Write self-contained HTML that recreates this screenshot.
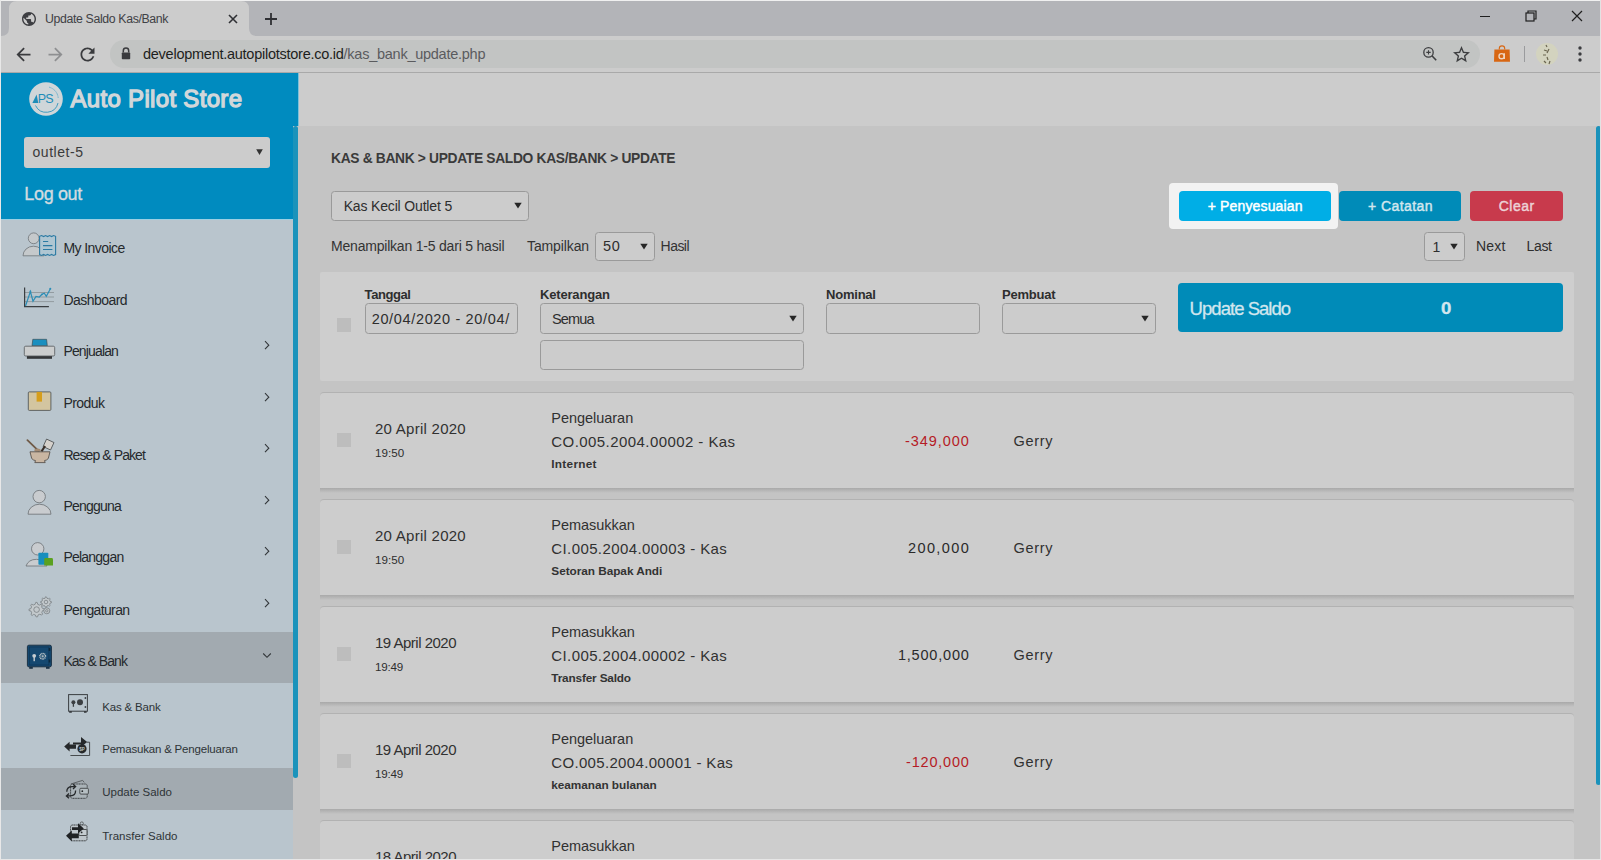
<!DOCTYPE html>
<html><head><meta charset="utf-8"><style>
html,body{margin:0;padding:0;width:1601px;height:860px;overflow:hidden;background:#c4c4c4;font-family:"Liberation Sans", sans-serif;}
#root{position:relative;width:1601px;height:860px;overflow:hidden;}
</style></head><body><div id="root">
<div style="position:absolute;left:0px;top:0px;width:1601px;height:860px;background:#e6e6e6;"></div>
<div style="position:absolute;left:1px;top:1px;width:1599px;height:35px;background:#b3b4b8;"></div>
<svg style="position:absolute;left:0;top:0" width="260" height="37"><path d="M1 36 Q9 36 9 28 L9 9 Q9 1 17 1 L241 1 Q249 1 249 9 L249 28 Q249 36 257 36 Z" fill="#cccccc"/></svg>
<div style="position:absolute;left:1px;top:36px;width:1599px;height:36px;background:#cccccc;"></div>
<div style="position:absolute;left:1px;top:72px;width:1599px;height:1px;background:#a9a9a9;"></div>
<div style="position:absolute;left:110px;top:40px;width:1370px;height:28px;background:#c2c4c3;border-radius:14px;"></div>
<svg style="position:absolute;left:21.8px;top:12px" width="14" height="14" viewBox="2 2 20 20"><circle cx="12" cy="12" r="9.6" fill="#cccccc"/><path fill="#3d3e42" d="M12 2C6.48 2 2 6.48 2 12s4.48 10 10 10 10-4.48 10-10S17.520 2 12 2zm-1 17.93c-3.95-.49-7-3.85-7-7.93 0-.62.08-1.21.21-1.790L9 15v1c0 1.1.9 2 2 2v1.93zm6.9-2.54c-.26-.81-1-1.39-1.9-1.39h-1v-3c0-.55-.45-1-1-1H8v-2h2c.55 0 1-.45 1-1V7h2c1.1 0 2-.9 2-2v-.41c2.93 1.19 5 4.06 5 7.41 0 2.08-.8 3.97-2.1 5.39z"/></svg>
<div style="position:absolute;left:45px;top:12.69px;font-size:12.3px;line-height:12.3px;font-weight:normal;color:#404145;white-space:nowrap;font-family:'Liberation Sans', sans-serif;letter-spacing:-0.354px;"><span>Update Saldo Kas/Bank</span></div>
<svg style="position:absolute;left:228px;top:14px" width="10" height="10" viewBox="0 0 10 10"><path d="M1 1 L9 9 M9 1 L1 9" stroke="#2f3034" stroke-width="1.6"/></svg>
<svg style="position:absolute;left:264px;top:12px" width="14" height="14" viewBox="0 0 14 14"><path d="M7 1 V13 M1 7 H13" stroke="#2f3034" stroke-width="1.8"/></svg>
<div style="position:absolute;left:1480px;top:16px;width:10px;height:1.3px;background:#1f1f1f;"></div>
<svg style="position:absolute;left:1525px;top:10px" width="12" height="12" viewBox="0 0 12 12"><rect x="1" y="3" width="8" height="8" fill="none" stroke="#1f1f1f" stroke-width="1.2"/><path d="M3 3 V1 H11 V9 H9" fill="none" stroke="#1f1f1f" stroke-width="1.2"/></svg>
<svg style="position:absolute;left:1571px;top:10px" width="12" height="12" viewBox="0 0 12 12"><path d="M1 1 L11 11 M11 1 L1 11" stroke="#1f1f1f" stroke-width="1.2"/></svg>
<svg style="position:absolute;left:12.5px;top:43.5px" width="21" height="21" viewBox="0 0 24 24"><path fill="#3a3b3e" d="M20 11H7.83l5.59-5.59L12 4l-8 8 8 8 1.41-1.41L7.83 13H20v-2z"/></svg>
<svg style="position:absolute;left:44.5px;top:43.5px" width="21" height="21" viewBox="0 0 24 24"><path fill="#8e8f91" d="M12 4l-1.41 1.41L16.17 11H4v2h12.17l-5.58 5.59L12 20l8-8z"/></svg>
<svg style="position:absolute;left:76.5px;top:43.5px" width="21" height="21" viewBox="0 0 24 24"><path fill="#3a3b3e" d="M17.65 6.35C16.2 4.9 14.21 4 12 4c-4.420 0-7.990 3.58-7.990 8s3.57 8 7.990 8c3.73 0 6.84-2.55 7.73-6h-2.08c-.82 2.33-3.04 4-5.65 4-3.31 0-6-2.69-6-6s2.69-6 6-6c1.66 0 3.14.69 4.22 1.78L13 11h7V4l-2.35 2.35z"/></svg>
<svg style="position:absolute;left:121px;top:47px" width="10" height="13" viewBox="0 0 10 13"><path d="M2.3 5.5 V3.8 A2.7 2.7 0 0 1 7.7 3.8 V5.5" fill="none" stroke="#3a3b3e" stroke-width="1.5"/><rect x="0.8" y="5.5" width="8.4" height="6.7" rx="0.8" fill="#3a3b3e"/></svg>
<div style="position:absolute;left:143px;top:46.73px;font-size:14.5px;line-height:14.5px;font-weight:normal;color:#1d1e20;white-space:nowrap;font-family:'Liberation Sans', sans-serif;letter-spacing:-0.256px;"><span>development.autopilotstore.co.id<span style="color:#5a5b5e">/kas_bank_update.php</span></span></div>
<svg style="position:absolute;left:1418px;top:42px" width="22" height="22" viewBox="0 0 22 22"><circle cx="10.5" cy="10.4" r="4.7" fill="none" stroke="#3d3e40" stroke-width="1.3"/><path d="M13.9 13.8 L18.2 18.2" stroke="#3d3e40" stroke-width="1.6"/><path d="M10.5 8.2 V12.6 M8.3 10.4 H12.7" stroke="#3d3e40" stroke-width="1.1"/></svg>
<svg style="position:absolute;left:1453px;top:45.5px" width="17" height="17" viewBox="2 2 20 20"><path fill="#3d3e40" d="M22 9.24l-7.19-.62L12 2 9.19 8.63 2 9.24l5.46 4.73L5.82 21 12 17.27 18.18 21l-1.63-7.030L22 9.24zM12 15.4l-3.76 2.27 1-4.28-3.32-2.88 4.38-.38L12 6.1l1.71 4.04 4.38.38-3.32 2.88 1 4.28L12 15.4z"/></svg>
<svg style="position:absolute;left:1492px;top:44px" width="20" height="20" viewBox="0 0 20 20"><path d="M7.3 5.5 V4.6 A2.7 2.7 0 0 1 12.7 4.6 V5.5" fill="none" stroke="#d86612" stroke-width="1.1"/><path d="M2.4 5.6 H17.6 L18 17.8 H2 Z" fill="#d86612"/><circle cx="9.6" cy="12.2" r="2.6" fill="none" stroke="#eed5c0" stroke-width="1.4"/><path d="M12.3 9.3 V15" stroke="#eed5c0" stroke-width="1.4"/></svg>
<div style="position:absolute;left:1524px;top:46px;width:1px;height:16px;background:#9a9b9d;"></div>
<svg style="position:absolute;left:1535px;top:42px" width="24" height="24" viewBox="0 0 24 24"><circle cx="12" cy="12" r="11" fill="#d3d3bf"/><path d="M11 3 L12 5 M9 8 L12 9 M14 7 L12 11 M8 13 L11 13 M12 15 L13 18 M9 19 L11 21 M15 19 L14 22" stroke="#6b6650" stroke-width="1.2"/></svg>
<svg style="position:absolute;left:1576px;top:45px" width="8" height="18" viewBox="0 0 8 18"><circle cx="4" cy="3" r="1.7" fill="#3a3b3e"/><circle cx="4" cy="9" r="1.7" fill="#3a3b3e"/><circle cx="4" cy="15" r="1.7" fill="#3a3b3e"/></svg>
<div style="position:absolute;left:293px;top:73px;width:1307px;height:786px;background:#c4c4c4;"></div>
<div style="position:absolute;left:298px;top:73px;width:1302px;height:53px;background:#cccccc;"></div>
<div style="position:absolute;left:1px;top:73px;width:297px;height:53px;background:#008bbf;"></div>
<div style="position:absolute;left:1px;top:126px;width:292px;height:93px;background:#008bbf;"></div>
<div style="position:absolute;left:1px;top:219px;width:292px;height:640px;background:#b9c5cd;"></div>
<div style="position:absolute;left:1px;top:632px;width:292px;height:51px;background:#a2aab0;"></div>
<div style="position:absolute;left:1px;top:768px;width:292px;height:42px;background:#a2aab0;"></div>
<div style="position:absolute;left:293px;top:126px;width:5px;height:652px;background:#1b93bb;border-radius:3px;"></div>
<div style="position:absolute;left:1px;top:219px;width:292px;height:1px;background:#9ccfe2;"></div>
<div style="position:absolute;left:298px;top:73px;width:1px;height:53px;background:#7fc0d8;"></div>
<svg style="position:absolute;left:28.5px;top:81.8px" width="34" height="34" viewBox="0 0 34 34">
<circle cx="17" cy="17" r="16.8" fill="#cfd6d9"/>
<path d="M6.5 23.5 A12 12 0 0 0 29 21" fill="none" stroke="#1d8db8" stroke-width="0.8"/>
<path d="M20 5.2 A12 12 0 0 1 29.2 16" fill="none" stroke="#5aa9c9" stroke-width="1" stroke-dasharray="0.9 0.5"/>
<path d="M3.4 20.9 L7.6 12.5 L9.3 20.9 Z" fill="#1d8db8"/>
<text x="8.8" y="20.9" font-family="Liberation Sans" font-size="12.5" fill="#1d8db8" letter-spacing="-0.8">PS</text>
</svg>
<div style="position:absolute;left:70.5px;top:86.98px;font-size:24px;line-height:24px;font-weight:normal;color:#d2d7da;white-space:nowrap;font-family:'Liberation Sans', sans-serif;letter-spacing:0.315px;-webkit-text-stroke:1.3px #d2d7da;"><span>Auto Pilot Store</span></div>
<div style="position:absolute;left:24px;top:137px;width:246px;height:31px;background:#cccccc;border-radius:3px;"></div>
<div style="position:absolute;left:32.5px;top:145.45px;font-size:14px;line-height:14px;font-weight:normal;color:#3a3a3a;white-space:nowrap;font-family:'Liberation Sans', sans-serif;letter-spacing:0.541px;"><span>outlet-5</span></div>
<svg style="position:absolute;left:255.5px;top:148.5px" width="7" height="7" viewBox="0 0 7 7"><path d="M0.2 0.3 H6.8 L3.5 6 Z" fill="#333"/></svg>
<div style="position:absolute;left:24.3px;top:184.76px;font-size:18px;line-height:18px;font-weight:normal;color:#d3dbe0;white-space:nowrap;font-family:'Liberation Sans', sans-serif;letter-spacing:-0.344px;-webkit-text-stroke:0.35px #d3dbe0;"><span>Log out</span></div>
<div style="position:absolute;left:63.4px;top:240.65px;font-size:14px;line-height:14px;font-weight:normal;color:#25292c;white-space:nowrap;font-family:'Liberation Sans', sans-serif;letter-spacing:-0.558px;"><span>My Invoice</span></div>
<div style="position:absolute;left:63.4px;top:293.05px;font-size:14px;line-height:14px;font-weight:normal;color:#25292c;white-space:nowrap;font-family:'Liberation Sans', sans-serif;letter-spacing:-0.538px;"><span>Dashboard</span></div>
<div style="position:absolute;left:63.4px;top:343.95px;font-size:14px;line-height:14px;font-weight:normal;color:#25292c;white-space:nowrap;font-family:'Liberation Sans', sans-serif;letter-spacing:-0.849px;"><span>Penjualan</span></div>
<svg style="position:absolute;left:263px;top:339.8px" width="8" height="11" viewBox="0 0 8 11"><path d="M2 1.2 L5.8 5.2 L2 9.2" fill="none" stroke="#33373a" stroke-width="1.1"/></svg>
<div style="position:absolute;left:63.4px;top:395.85px;font-size:14px;line-height:14px;font-weight:normal;color:#25292c;white-space:nowrap;font-family:'Liberation Sans', sans-serif;letter-spacing:-0.574px;"><span>Produk</span></div>
<svg style="position:absolute;left:263px;top:391.7px" width="8" height="11" viewBox="0 0 8 11"><path d="M2 1.2 L5.8 5.2 L2 9.2" fill="none" stroke="#33373a" stroke-width="1.1"/></svg>
<div style="position:absolute;left:63.4px;top:447.55px;font-size:14px;line-height:14px;font-weight:normal;color:#25292c;white-space:nowrap;font-family:'Liberation Sans', sans-serif;letter-spacing:-0.908px;"><span>Resep &amp; Paket</span></div>
<svg style="position:absolute;left:263px;top:443.4px" width="8" height="11" viewBox="0 0 8 11"><path d="M2 1.2 L5.8 5.2 L2 9.2" fill="none" stroke="#33373a" stroke-width="1.1"/></svg>
<div style="position:absolute;left:63.4px;top:498.65px;font-size:14px;line-height:14px;font-weight:normal;color:#25292c;white-space:nowrap;font-family:'Liberation Sans', sans-serif;letter-spacing:-0.765px;"><span>Pengguna</span></div>
<svg style="position:absolute;left:263px;top:494.5px" width="8" height="11" viewBox="0 0 8 11"><path d="M2 1.2 L5.8 5.2 L2 9.2" fill="none" stroke="#33373a" stroke-width="1.1"/></svg>
<div style="position:absolute;left:63.4px;top:550.45px;font-size:14px;line-height:14px;font-weight:normal;color:#25292c;white-space:nowrap;font-family:'Liberation Sans', sans-serif;letter-spacing:-0.769px;"><span>Pelanggan</span></div>
<svg style="position:absolute;left:263px;top:546.3px" width="8" height="11" viewBox="0 0 8 11"><path d="M2 1.2 L5.8 5.2 L2 9.2" fill="none" stroke="#33373a" stroke-width="1.1"/></svg>
<div style="position:absolute;left:63.4px;top:602.55px;font-size:14px;line-height:14px;font-weight:normal;color:#25292c;white-space:nowrap;font-family:'Liberation Sans', sans-serif;letter-spacing:-0.634px;"><span>Pengaturan</span></div>
<svg style="position:absolute;left:263px;top:598.4px" width="8" height="11" viewBox="0 0 8 11"><path d="M2 1.2 L5.8 5.2 L2 9.2" fill="none" stroke="#33373a" stroke-width="1.1"/></svg>
<div style="position:absolute;left:63.4px;top:653.55px;font-size:14px;line-height:14px;font-weight:normal;color:#25292c;white-space:nowrap;font-family:'Liberation Sans', sans-serif;letter-spacing:-0.963px;"><span>Kas &amp; Bank</span></div>
<svg style="position:absolute;left:262px;top:652px" width="10" height="7" viewBox="0 0 10 7"><path d="M1.2 1.5 L5 5.3 L8.8 1.5" fill="none" stroke="#33373a" stroke-width="1.1"/></svg>
<div style="position:absolute;left:102.2px;top:702.07px;font-size:11.5px;line-height:11.5px;font-weight:normal;color:#2e3437;white-space:nowrap;font-family:'Liberation Sans', sans-serif;letter-spacing:-0.166px;"><span>Kas &amp; Bank</span></div>
<div style="position:absolute;left:102.2px;top:744.47px;font-size:11.5px;line-height:11.5px;font-weight:normal;color:#2e3437;white-space:nowrap;font-family:'Liberation Sans', sans-serif;letter-spacing:-0.197px;"><span>Pemasukan &amp; Pengeluaran</span></div>
<div style="position:absolute;left:102.2px;top:787.07px;font-size:11.5px;line-height:11.5px;font-weight:normal;color:#2e3437;white-space:nowrap;font-family:'Liberation Sans', sans-serif;letter-spacing:0.009px;"><span>Update Saldo</span></div>
<div style="position:absolute;left:102.2px;top:830.67px;font-size:11.5px;line-height:11.5px;font-weight:normal;color:#2e3437;white-space:nowrap;font-family:'Liberation Sans', sans-serif;letter-spacing:0.023px;"><span>Transfer Saldo</span></div>
<svg style="position:absolute;left:0;top:0;overflow:visible" width="1" height="1">
<g>
 <circle cx="33.7" cy="238.3" r="5.4" fill="#c5c9cb" stroke="#6f7477" stroke-width="0.8"/>
 <path d="M23 255.8 A10.5 9.6 0 0 1 44 255.8 Z" fill="#c5c9cb" stroke="#6f7477" stroke-width="0.8"/>
 <path d="M39.6 236.3 L41.6 235.6 L43.6 236.6 L45.6 235.6 L47.6 236.6 L49.6 235.6 L51.6 236.6 L53.6 235.6 L55.6 236.3 L55.6 254.6 L53.6 255.4 L51.6 254.4 L49.6 255.4 L47.6 254.4 L45.6 255.4 L43.6 254.4 L41.6 255.4 L39.6 254.6 Z" fill="#afc6d2" stroke="#2b7aa3" stroke-width="1.1"/>
 <path d="M43 241.5 H48.2 M43 245.6 H52.4 M43 249.5 H52.4" stroke="#2b7aa3" stroke-width="1.2"/>
</g>
<g>
 <path d="M25 292.5 H54 M25 297 H54 M25 301.6 H54" stroke="#8d969b" stroke-width="0.9"/>
 <path d="M24.6 287.6 V306.6 H48.9" fill="none" stroke="#3a3e41" stroke-width="1.2"/>
 <path d="M25.5 306 L30.4 291.5 L33 301.2 L36 296.5 L39.3 297 L42 294.3 L44.3 293.2 L46.3 296.4 L49.6 290.2 L50.3 288.8" fill="none" stroke="#2a8db6" stroke-width="1.2"/>
 <circle cx="30.4" cy="291.5" r="0.9" fill="#2a8db6"/><circle cx="42" cy="294.3" r="0.9" fill="#2a8db6"/><circle cx="50.3" cy="288.8" r="1" fill="#2a8db6"/>
</g>
<g>
 <path d="M32 345.8 L32.8 339.3 H46.6 L47.3 345.8 Z" fill="#1b8fbf" stroke="#3d4447" stroke-width="0.6"/>
 <rect x="26.9" y="355.6" width="25.1" height="3.2" fill="#343638"/>
 <rect x="24.3" y="346.2" width="30.4" height="9.8" rx="1.4" fill="#cbcdcd" stroke="#54585a" stroke-width="0.8"/>
</g>
<g>
 <rect x="28.3" y="391.9" width="22.6" height="18.5" rx="1" fill="#d3c5a0" stroke="#54585a" stroke-width="0.9"/>
 <rect x="36.6" y="391.9" width="5.4" height="9.7" fill="#d69e1b"/>
</g>
<g>
 <path d="M27.4 440.2 L38.5 450.8" stroke="#6f5a47" stroke-width="1.8" stroke-linecap="round"/>
 <ellipse cx="37.5" cy="450.2" rx="3.2" ry="1.6" fill="#a38a73"/>
 <g transform="rotate(25 48.5 444.4)"><rect x="44.5" y="440.4" width="8.2" height="8.2" fill="#d5d1cc" stroke="#4d5254" stroke-width="0.8"/></g>
 <path d="M41.5 451.5 L45 446" stroke="#3a2e27" stroke-width="2.2"/>
 <path d="M30 451.8 H50 L48.3 458.5 Q46.5 460.5 44.5 460.6 L45.2 462.6 H34.8 L35.5 460.6 Q33.5 460.5 31.7 458.5 Z" fill="#c9b6a2" stroke="#4d4640" stroke-width="0.8"/>
</g>
<g>
 <circle cx="39.2" cy="496.6" r="6.2" fill="#c9cccf" stroke="#6b7073" stroke-width="0.8"/>
 <path d="M28 514.2 A11.5 10 0 0 1 51 514.2 Z" fill="#c9cccf" stroke="#6b7073" stroke-width="0.8"/>
</g>
<g>
 <circle cx="37.7" cy="548.8" r="6.2" fill="#c9cccf" stroke="#6b7073" stroke-width="0.8"/>
 <path d="M26 566 A11 9.5 0 0 1 47 566 Z" fill="#c9cccf" stroke="#6b7073" stroke-width="0.8"/>
 <rect x="38.4" y="552.8" width="9.9" height="12" rx="0.8" fill="#178ebd"/>
 <path d="M44.2 565.6 V559.4 Q44.2 558 45.6 558 H51.6 Q53 558 53 559.4 V565.6 Z" fill="#5aa11f"/>
</g>
<g fill="#c3c9cc" stroke="#7b8285" stroke-width="0.8">
 <path d="M35.8 602.3 L37.2 602.5 L37.8 604.4 L39.6 605.1 L41.2 604.1 L42.3 605 L41.6 606.9 L42.6 608.5 L44.4 608.8 L44.4 610.2 L42.6 610.6 L41.8 612.4 L42.6 614.1 L41.6 615.1 L39.9 614.2 L38.1 614.9 L37.6 616.8 L36.1 616.9 L35.4 615 L33.6 614.4 L32.1 615.5 L31 614.6 L31.7 612.8 L30.9 611 L29 610.6 L29 609.1 L30.9 608.6 L31.6 606.8 L30.7 605.2 L31.6 604.2 L33.3 605 L35.1 604.3 Z"/>
 <circle cx="36.6" cy="609.6" r="2.8"/>
 <path d="M45.4 596.8 L46.6 597 L47 598.3 L48.3 598.8 L49.4 598.1 L50.2 598.9 L49.6 600.1 L50.1 601.4 L51.4 601.6 L51.4 602.8 L50.1 603.1 L49.6 604.3 L50.2 605.4 L49.3 606.2 L48.2 605.5 L46.9 606 L46.6 607.3 L45.4 607.3 L45 606 L43.8 605.5 L42.7 606.2 L41.9 605.3 L42.5 604.2 L42 603 L40.7 602.7 L40.7 601.5 L42 601.2 L42.5 599.9 L41.9 598.8 L42.8 598 L43.9 598.7 L45.1 598.2 Z"/>
 <circle cx="46" cy="602" r="1.8"/>
 <circle cx="46.8" cy="610.8" r="3" />
 <circle cx="46.8" cy="610.8" r="1.2"/>
</g>
<g>
 <rect x="27.4" y="645.2" width="24" height="21.6" rx="1.5" fill="#154870" stroke="#1b3246" stroke-width="1"/>
 <rect x="29.2" y="667" width="3.6" height="1.8" fill="#1b3246"/><rect x="46" y="667" width="3.6" height="1.8" fill="#1b3246"/>
 <rect x="48.6" y="648" width="1.6" height="3" fill="#0d2436"/><rect x="48.6" y="659.5" width="1.6" height="3" fill="#0d2436"/>
 <circle cx="34.2" cy="655.8" r="1.9" fill="#c7cdd1"/><rect x="33.5" y="656" width="1.4" height="5.2" fill="#c7cdd1"/>
 <rect x="29.3" y="647" width="19.6" height="18" fill="none" stroke="#0f3654" stroke-width="0.7"/><circle cx="42.7" cy="656.2" r="2.9" fill="#3a6482" stroke="#c9cfd2" stroke-width="1.3" stroke-dasharray="0.9 0.6"/><circle cx="42.7" cy="656.2" r="1" fill="#aab6bd"/>
</g>
<g fill="none" stroke="#3a3e41">
 <rect x="68.6" y="694.6" width="18.8" height="16.6" stroke-width="1"/>
 <circle cx="73.4" cy="702.2" r="2" fill="#3a3e41" stroke="none"/><path d="M73.4 703 V706.8" stroke-width="1.3"/>
 <circle cx="80" cy="702.2" r="3" fill="#3a3e41" stroke="none"/>
 <circle cx="85.4" cy="698" r="0.9" fill="#3a3e41" stroke="none"/><circle cx="85.4" cy="707" r="0.9" fill="#3a3e41" stroke="none"/>
 <rect x="69.2" y="711" width="2.6" height="1.8" fill="#3a3e41" stroke="none"/><rect x="84" y="711" width="2.6" height="1.8" fill="#3a3e41" stroke="none"/>
</g>
<g>
 <path d="M70.4 755.5 H89.6 V742.2 H87" fill="none" stroke="#3a3e41" stroke-width="0.9"/>
 <path d="M73 742.4 H81 V737 L87.2 742 L81 747 V744.6 H73 Z" fill="#26292b"/>
 <path d="M64.2 746.6 L69.6 741.8 V744.4 H76 V748.8 H69.6 V751.4 Z" fill="#26292b"/>
 <circle cx="82" cy="748.8" r="4.6" fill="#26292b"/>
 <text x="82" y="750.6" font-size="4.5" font-family="Liberation Sans" font-weight="bold" fill="#bfc8cc" text-anchor="middle">$P</text>
</g>
<g>
 <path d="M70.8 784 L82.6 780.4 L84.2 782.4" fill="none" stroke="#55595b" stroke-width="0.9"/>
 <rect x="70.6" y="784" width="16.6" height="14.3" rx="1.8" fill="#aab3b8" stroke="#3f4345" stroke-width="1" stroke-dasharray="1.2 0.4"/>
 <rect x="79.8" y="788.3" width="8.6" height="5.8" rx="1" fill="#b6bfc3" stroke="#3f4345" stroke-width="0.9"/>
 <circle cx="82.3" cy="791.2" r="0.9" fill="#26292b"/>
 <path d="M66.8 791.8 Q66.8 786.6 72 786.6 H75.2 M73 784.3 L75.6 786.6 L73 788.9" fill="none" stroke="#26292b" stroke-width="1.3"/>
 <path d="M75.6 790.6 Q75.6 795.9 70.5 795.9 H66.8 M69 793.6 L66.4 795.9 L69 798.2" fill="none" stroke="#26292b" stroke-width="1.3"/>
</g>
<g>
 <circle cx="81.8" cy="823.5" r="1.6" fill="none" stroke="#4f5456" stroke-width="0.8"/>
 <rect x="70.6" y="825" width="16.4" height="15.8" rx="1.8" fill="#bdc5ca" stroke="#3f4345" stroke-width="1" stroke-dasharray="1.2 0.4"/>
 <rect x="78.8" y="829.5" width="8.2" height="6" rx="1" fill="#c4ccd0" stroke="#3f4345" stroke-width="0.9"/>
 <circle cx="81.6" cy="832.4" r="0.9" fill="#26292b"/>
 <path d="M72 827.2 H78 V823.3 L83.8 828.4 L78 833.4 V829.9 H72 Z" fill="#1f2224"/>
 <path d="M66 835.8 L71.8 830.6 V833.4 H78.8 V838.2 H71.8 V841.4 Z" fill="#1f2224"/>
</g>
</svg>
<div style="position:absolute;left:331px;top:151.82px;font-size:13.8px;line-height:13.8px;font-weight:bold;color:#3a3a3a;white-space:nowrap;font-family:'Liberation Sans', sans-serif;letter-spacing:-0.327px;"><span>KAS &amp; BANK &gt; UPDATE SALDO KAS/BANK &gt; UPDATE</span></div>
<div style="position:absolute;left:331px;top:191px;width:196px;height:28px;background:#cccccc;border:1px solid #9a9a9a;border-radius:3.5px;"></div>
<svg style="position:absolute;left:514px;top:202.0px" width="8" height="7" viewBox="0 0 8 7"><path d="M0.3 0.8 H7.7 L4 6.6 Z" fill="#262626"/></svg>
<div style="position:absolute;left:343.7px;top:199.15px;font-size:14px;line-height:14px;font-weight:normal;color:#2e2e2e;white-space:nowrap;font-family:'Liberation Sans', sans-serif;letter-spacing:-0.164px;"><span>Kas Kecil Outlet 5</span></div>
<div style="position:absolute;left:331px;top:239.15px;font-size:14px;line-height:14px;font-weight:normal;color:#333333;white-space:nowrap;font-family:'Liberation Sans', sans-serif;letter-spacing:-0.203px;"><span>Menampilkan 1-5 dari 5 hasil</span></div>
<div style="position:absolute;left:527px;top:239.15px;font-size:14px;line-height:14px;font-weight:normal;color:#333333;white-space:nowrap;font-family:'Liberation Sans', sans-serif;letter-spacing:-0.116px;"><span>Tampilkan</span></div>
<div style="position:absolute;left:595px;top:232px;width:58px;height:27px;background:#cccccc;border:1px solid #9a9a9a;border-radius:3.5px;"></div>
<svg style="position:absolute;left:639.5px;top:242.5px" width="8" height="7" viewBox="0 0 8 7"><path d="M0.3 0.8 H7.7 L4 6.6 Z" fill="#262626"/></svg>
<div style="position:absolute;left:603px;top:239.33px;font-size:14.5px;line-height:14.5px;font-weight:normal;color:#2e2e2e;white-space:nowrap;font-family:'Liberation Sans', sans-serif;letter-spacing:0.762px;"><span>50</span></div>
<div style="position:absolute;left:660.6px;top:239.15px;font-size:14px;line-height:14px;font-weight:normal;color:#333333;white-space:nowrap;font-family:'Liberation Sans', sans-serif;letter-spacing:-0.556px;"><span>Hasil</span></div>
<div style="position:absolute;left:1339px;top:191px;width:122px;height:30px;background:#008bb8;border-radius:4px;"></div>
<div style="position:absolute;left:1368px;top:198.85px;font-size:14px;line-height:14px;font-weight:normal;color:#d2e6ee;white-space:nowrap;font-family:'Liberation Sans', sans-serif;letter-spacing:0.424px;-webkit-text-stroke:0.45px #d2e6ee;"><span>+ Catatan</span></div>
<div style="position:absolute;left:1470px;top:191px;width:93px;height:30px;background:#c83a4c;border-radius:4px;"></div>
<div style="position:absolute;left:1498.7px;top:198.85px;font-size:14px;line-height:14px;font-weight:normal;color:#ecd2d6;white-space:nowrap;font-family:'Liberation Sans', sans-serif;letter-spacing:0.510px;-webkit-text-stroke:0.45px #ecd2d6;"><span>Clear</span></div>
<div style="position:absolute;left:1424px;top:232px;width:39px;height:27px;background:#cccccc;border:1px solid #9a9a9a;border-radius:3.5px;"></div>
<svg style="position:absolute;left:1449.7px;top:242.5px" width="8" height="7" viewBox="0 0 8 7"><path d="M0.3 0.8 H7.7 L4 6.6 Z" fill="#262626"/></svg>
<div style="position:absolute;left:1432.5px;top:240.15px;font-size:14px;line-height:14px;font-weight:normal;color:#2e2e2e;white-space:nowrap;font-family:'Liberation Sans', sans-serif;letter-spacing:-1.297px;"><span>1</span></div>
<div style="position:absolute;left:1476px;top:239.15px;font-size:14px;line-height:14px;font-weight:normal;color:#2e2e2e;white-space:nowrap;font-family:'Liberation Sans', sans-serif;letter-spacing:0.234px;"><span>Next</span></div>
<div style="position:absolute;left:1526.6px;top:239.15px;font-size:14px;line-height:14px;font-weight:normal;color:#2e2e2e;white-space:nowrap;font-family:'Liberation Sans', sans-serif;letter-spacing:-0.389px;"><span>Last</span></div>
<div style="position:absolute;left:320px;top:272px;width:1254px;height:109px;background:#cecece;border-radius:2px;"></div>
<div style="position:absolute;left:337px;top:318px;width:14px;height:14px;background:#bdbdbd;"></div>
<div style="position:absolute;left:364.6px;top:287.50px;font-size:13px;line-height:13px;font-weight:bold;color:#2e2e2e;white-space:nowrap;font-family:'Liberation Sans', sans-serif;letter-spacing:-0.430px;"><span>Tanggal</span></div>
<div style="position:absolute;left:364.6px;top:303px;width:151px;height:29px;background:#cccccc;border:1px solid #9a9a9a;border-radius:3.5px;"></div>
<div style="position:absolute;left:371.7px;top:312.13px;font-size:14.5px;line-height:14.5px;font-weight:normal;color:#2e2e2e;white-space:nowrap;font-family:'Liberation Sans', sans-serif;letter-spacing:0.652px;"><span>20/04/2020 - 20/04/</span></div>
<div style="position:absolute;left:540px;top:287.50px;font-size:13px;line-height:13px;font-weight:bold;color:#2e2e2e;white-space:nowrap;font-family:'Liberation Sans', sans-serif;letter-spacing:-0.181px;"><span>Keterangan</span></div>
<div style="position:absolute;left:540px;top:303px;width:262px;height:29px;background:#cccccc;border:1px solid #9a9a9a;border-radius:3.5px;"></div>
<svg style="position:absolute;left:789px;top:314.5px" width="8" height="7" viewBox="0 0 8 7"><path d="M0.3 0.8 H7.7 L4 6.6 Z" fill="#262626"/></svg>
<div style="position:absolute;left:552px;top:312.13px;font-size:14.5px;line-height:14.5px;font-weight:normal;color:#2e2e2e;white-space:nowrap;font-family:'Liberation Sans', sans-serif;letter-spacing:-0.864px;"><span>Semua</span></div>
<div style="position:absolute;left:540px;top:340px;width:262px;height:28px;background:#cccccc;border:1px solid #9a9a9a;border-radius:3.5px;"></div>
<div style="position:absolute;left:826px;top:287.50px;font-size:13px;line-height:13px;font-weight:bold;color:#2e2e2e;white-space:nowrap;font-family:'Liberation Sans', sans-serif;letter-spacing:-0.216px;"><span>Nominal</span></div>
<div style="position:absolute;left:826px;top:303px;width:152px;height:29px;background:#cccccc;border:1px solid #9a9a9a;border-radius:3.5px;"></div>
<div style="position:absolute;left:1002px;top:287.50px;font-size:13px;line-height:13px;font-weight:bold;color:#2e2e2e;white-space:nowrap;font-family:'Liberation Sans', sans-serif;letter-spacing:-0.234px;"><span>Pembuat</span></div>
<div style="position:absolute;left:1002px;top:303px;width:152px;height:29px;background:#cccccc;border:1px solid #9a9a9a;border-radius:3.5px;"></div>
<svg style="position:absolute;left:1140.5px;top:314.5px" width="8" height="7" viewBox="0 0 8 7"><path d="M0.3 0.8 H7.7 L4 6.6 Z" fill="#262626"/></svg>
<div style="position:absolute;left:1177.5px;top:283px;width:385px;height:48.5px;background:#008bb8;border-radius:4px;"></div>
<div style="position:absolute;left:1189.6px;top:299.54px;font-size:18.5px;line-height:18.5px;font-weight:normal;color:#d2e6ee;white-space:nowrap;font-family:'Liberation Sans', sans-serif;letter-spacing:-0.966px;-webkit-text-stroke:0.3px #d2e6ee;"><span>Update Saldo</span></div>
<div style="position:absolute;left:1440.8px;top:300.49px;font-size:16.2px;line-height:16.2px;font-weight:bold;color:#d2e6ee;white-space:nowrap;font-family:'Liberation Sans', sans-serif;-webkit-text-stroke:0.3px #d2e6ee;transform:scaleX(1.15);transform-origin:left;"><span>0</span></div>
<div style="position:absolute;left:320px;top:391.9px;width:1254px;height:96px;background:#cdcdcd;border-top:1px solid #b2b2b2;border-radius:4px 4px 0 0;box-sizing:border-box;"></div>
<div style="position:absolute;left:320px;top:487.9px;width:1254px;height:5px;background:linear-gradient(#a9a9a9,#c4c4c4);"></div>
<div style="position:absolute;left:337px;top:432.8px;width:14px;height:14px;background:#bdbdbd;"></div>
<div style="position:absolute;left:375px;top:421.20px;font-size:15px;line-height:15px;font-weight:normal;color:#313131;white-space:nowrap;font-family:'Liberation Sans', sans-serif;letter-spacing:0.261px;"><span>20 April 2020</span></div>
<div style="position:absolute;left:375px;top:447.18px;font-size:11.6px;line-height:11.6px;font-weight:normal;color:#2e2e2e;white-space:nowrap;font-family:'Liberation Sans', sans-serif;letter-spacing:0.045px;"><span>19:50</span></div>
<div style="position:absolute;left:551.3px;top:410.73px;font-size:14.5px;line-height:14.5px;font-weight:normal;color:#313131;white-space:nowrap;font-family:'Liberation Sans', sans-serif;letter-spacing:-0.034px;"><span>Pengeluaran</span></div>
<div style="position:absolute;left:551.3px;top:433.50px;font-size:15px;line-height:15px;font-weight:normal;color:#313131;white-space:nowrap;font-family:'Liberation Sans', sans-serif;letter-spacing:0.432px;"><span>CO.005.2004.00002 - Kas</span></div>
<div style="position:absolute;left:551.3px;top:459.41px;font-size:11.8px;line-height:11.8px;font-weight:bold;color:#333333;white-space:nowrap;font-family:'Liberation Sans', sans-serif;letter-spacing:0.277px;"><span>Internet</span></div>
<div style="position:absolute;left:904.9px;top:433.83px;font-size:14.5px;line-height:14.5px;font-weight:normal;color:#b51b25;white-space:nowrap;font-family:'Liberation Sans', sans-serif;letter-spacing:0.963px;"><span>-349,000</span></div>
<div style="position:absolute;left:1013.5px;top:433.73px;font-size:14.5px;line-height:14.5px;font-weight:normal;color:#313131;white-space:nowrap;font-family:'Liberation Sans', sans-serif;letter-spacing:0.709px;"><span>Gerry</span></div>
<div style="position:absolute;left:320px;top:498.9px;width:1254px;height:96px;background:#cdcdcd;border-top:1px solid #b2b2b2;border-radius:4px 4px 0 0;box-sizing:border-box;"></div>
<div style="position:absolute;left:320px;top:594.9px;width:1254px;height:5px;background:linear-gradient(#a9a9a9,#c4c4c4);"></div>
<div style="position:absolute;left:337px;top:539.8px;width:14px;height:14px;background:#bdbdbd;"></div>
<div style="position:absolute;left:375px;top:528.20px;font-size:15px;line-height:15px;font-weight:normal;color:#313131;white-space:nowrap;font-family:'Liberation Sans', sans-serif;letter-spacing:0.261px;"><span>20 April 2020</span></div>
<div style="position:absolute;left:375px;top:554.18px;font-size:11.6px;line-height:11.6px;font-weight:normal;color:#2e2e2e;white-space:nowrap;font-family:'Liberation Sans', sans-serif;letter-spacing:0.045px;"><span>19:50</span></div>
<div style="position:absolute;left:551.3px;top:517.73px;font-size:14.5px;line-height:14.5px;font-weight:normal;color:#313131;white-space:nowrap;font-family:'Liberation Sans', sans-serif;letter-spacing:-0.037px;"><span>Pemasukkan</span></div>
<div style="position:absolute;left:551.3px;top:540.50px;font-size:15px;line-height:15px;font-weight:normal;color:#313131;white-space:nowrap;font-family:'Liberation Sans', sans-serif;letter-spacing:0.396px;"><span>CI.005.2004.00003 - Kas</span></div>
<div style="position:absolute;left:551.3px;top:566.41px;font-size:11.8px;line-height:11.8px;font-weight:bold;color:#333333;white-space:nowrap;font-family:'Liberation Sans', sans-serif;letter-spacing:-0.039px;"><span>Setoran Bapak Andi</span></div>
<div style="position:absolute;left:907.9px;top:540.83px;font-size:14.5px;line-height:14.5px;font-weight:normal;color:#2a2a2a;white-space:nowrap;font-family:'Liberation Sans', sans-serif;letter-spacing:1.429px;"><span>200,000</span></div>
<div style="position:absolute;left:1013.5px;top:540.73px;font-size:14.5px;line-height:14.5px;font-weight:normal;color:#313131;white-space:nowrap;font-family:'Liberation Sans', sans-serif;letter-spacing:0.709px;"><span>Gerry</span></div>
<div style="position:absolute;left:320px;top:605.9px;width:1254px;height:96px;background:#cdcdcd;border-top:1px solid #b2b2b2;border-radius:4px 4px 0 0;box-sizing:border-box;"></div>
<div style="position:absolute;left:320px;top:701.9px;width:1254px;height:5px;background:linear-gradient(#a9a9a9,#c4c4c4);"></div>
<div style="position:absolute;left:337px;top:646.8px;width:14px;height:14px;background:#bdbdbd;"></div>
<div style="position:absolute;left:375px;top:635.20px;font-size:15px;line-height:15px;font-weight:normal;color:#313131;white-space:nowrap;font-family:'Liberation Sans', sans-serif;letter-spacing:-0.506px;"><span>19 April 2020</span></div>
<div style="position:absolute;left:375px;top:661.18px;font-size:11.6px;line-height:11.6px;font-weight:normal;color:#2e2e2e;white-space:nowrap;font-family:'Liberation Sans', sans-serif;letter-spacing:-0.205px;"><span>19:49</span></div>
<div style="position:absolute;left:551.3px;top:624.73px;font-size:14.5px;line-height:14.5px;font-weight:normal;color:#313131;white-space:nowrap;font-family:'Liberation Sans', sans-serif;letter-spacing:-0.037px;"><span>Pemasukkan</span></div>
<div style="position:absolute;left:551.3px;top:647.50px;font-size:15px;line-height:15px;font-weight:normal;color:#313131;white-space:nowrap;font-family:'Liberation Sans', sans-serif;letter-spacing:0.396px;"><span>CI.005.2004.00002 - Kas</span></div>
<div style="position:absolute;left:551.3px;top:673.41px;font-size:11.8px;line-height:11.8px;font-weight:bold;color:#333333;white-space:nowrap;font-family:'Liberation Sans', sans-serif;letter-spacing:-0.167px;"><span>Transfer Saldo</span></div>
<div style="position:absolute;left:897.9px;top:647.83px;font-size:14.5px;line-height:14.5px;font-weight:normal;color:#2a2a2a;white-space:nowrap;font-family:'Liberation Sans', sans-serif;letter-spacing:0.811px;"><span>1,500,000</span></div>
<div style="position:absolute;left:1013.5px;top:647.73px;font-size:14.5px;line-height:14.5px;font-weight:normal;color:#313131;white-space:nowrap;font-family:'Liberation Sans', sans-serif;letter-spacing:0.709px;"><span>Gerry</span></div>
<div style="position:absolute;left:320px;top:712.9px;width:1254px;height:96px;background:#cdcdcd;border-top:1px solid #b2b2b2;border-radius:4px 4px 0 0;box-sizing:border-box;"></div>
<div style="position:absolute;left:320px;top:808.9px;width:1254px;height:5px;background:linear-gradient(#a9a9a9,#c4c4c4);"></div>
<div style="position:absolute;left:337px;top:753.8px;width:14px;height:14px;background:#bdbdbd;"></div>
<div style="position:absolute;left:375px;top:742.20px;font-size:15px;line-height:15px;font-weight:normal;color:#313131;white-space:nowrap;font-family:'Liberation Sans', sans-serif;letter-spacing:-0.506px;"><span>19 April 2020</span></div>
<div style="position:absolute;left:375px;top:768.18px;font-size:11.6px;line-height:11.6px;font-weight:normal;color:#2e2e2e;white-space:nowrap;font-family:'Liberation Sans', sans-serif;letter-spacing:-0.205px;"><span>19:49</span></div>
<div style="position:absolute;left:551.3px;top:731.73px;font-size:14.5px;line-height:14.5px;font-weight:normal;color:#313131;white-space:nowrap;font-family:'Liberation Sans', sans-serif;letter-spacing:-0.034px;"><span>Pengeluaran</span></div>
<div style="position:absolute;left:551.3px;top:754.50px;font-size:15px;line-height:15px;font-weight:normal;color:#313131;white-space:nowrap;font-family:'Liberation Sans', sans-serif;letter-spacing:0.328px;"><span>CO.005.2004.00001 - Kas</span></div>
<div style="position:absolute;left:551.3px;top:780.41px;font-size:11.8px;line-height:11.8px;font-weight:bold;color:#333333;white-space:nowrap;font-family:'Liberation Sans', sans-serif;letter-spacing:-0.048px;"><span>keamanan bulanan</span></div>
<div style="position:absolute;left:906.0px;top:754.83px;font-size:14.5px;line-height:14.5px;font-weight:normal;color:#b51b25;white-space:nowrap;font-family:'Liberation Sans', sans-serif;letter-spacing:0.808px;"><span>-120,000</span></div>
<div style="position:absolute;left:1013.5px;top:754.73px;font-size:14.5px;line-height:14.5px;font-weight:normal;color:#313131;white-space:nowrap;font-family:'Liberation Sans', sans-serif;letter-spacing:0.709px;"><span>Gerry</span></div>
<div style="position:absolute;left:320px;top:819.9px;width:1254px;height:96px;background:#cdcdcd;border-top:1px solid #b2b2b2;border-radius:4px 4px 0 0;box-sizing:border-box;"></div>
<div style="position:absolute;left:320px;top:915.9px;width:1254px;height:5px;background:linear-gradient(#a9a9a9,#c4c4c4);"></div>
<div style="position:absolute;left:337px;top:860.8px;width:14px;height:14px;background:#bdbdbd;"></div>
<div style="position:absolute;left:375px;top:849.20px;font-size:15px;line-height:15px;font-weight:normal;color:#313131;white-space:nowrap;font-family:'Liberation Sans', sans-serif;letter-spacing:-0.506px;"><span>18 April 2020</span></div>
<div style="position:absolute;left:375px;top:875.18px;font-size:11.6px;line-height:11.6px;font-weight:normal;color:#2e2e2e;white-space:nowrap;font-family:'Liberation Sans', sans-serif;letter-spacing:-0.205px;"><span>19:49</span></div>
<div style="position:absolute;left:551.3px;top:838.73px;font-size:14.5px;line-height:14.5px;font-weight:normal;color:#313131;white-space:nowrap;font-family:'Liberation Sans', sans-serif;letter-spacing:-0.037px;"><span>Pemasukkan</span></div>
<div style="position:absolute;left:551.3px;top:861.50px;font-size:15px;line-height:15px;font-weight:normal;color:#313131;white-space:nowrap;font-family:'Liberation Sans', sans-serif;letter-spacing:0.396px;"><span>CI.005.2004.00001 - Kas</span></div>
<div style="position:absolute;left:1596px;top:126px;width:4.5px;height:659px;background:#1a92bb;border-radius:3px;"></div>
<div style="position:absolute;left:1169px;top:183px;width:169px;height:46px;background:#f2f2f2;border-radius:4px;"></div>
<div style="position:absolute;left:1179px;top:191px;width:152px;height:30px;background:#00aee6;border-radius:4px;"></div>
<div style="position:absolute;left:1207.7px;top:198.65px;font-size:14px;line-height:14px;font-weight:normal;color:#ffffff;white-space:nowrap;font-family:'Liberation Sans', sans-serif;letter-spacing:0.148px;-webkit-text-stroke:0.45px #ffffff;"><span>+ Penyesuaian</span></div>
<div style="position:absolute;left:0px;top:0px;width:1601px;height:1px;background:#f0f0f0;"></div>
<div style="position:absolute;left:0px;top:0px;width:1px;height:860px;background:#e8e8e8;"></div>
<div style="position:absolute;left:1600px;top:0px;width:1px;height:860px;background:#e2e2e2;"></div>
<div style="position:absolute;left:0px;top:859px;width:1601px;height:1px;background:#e6e6e6;"></div>
</div></body></html>
